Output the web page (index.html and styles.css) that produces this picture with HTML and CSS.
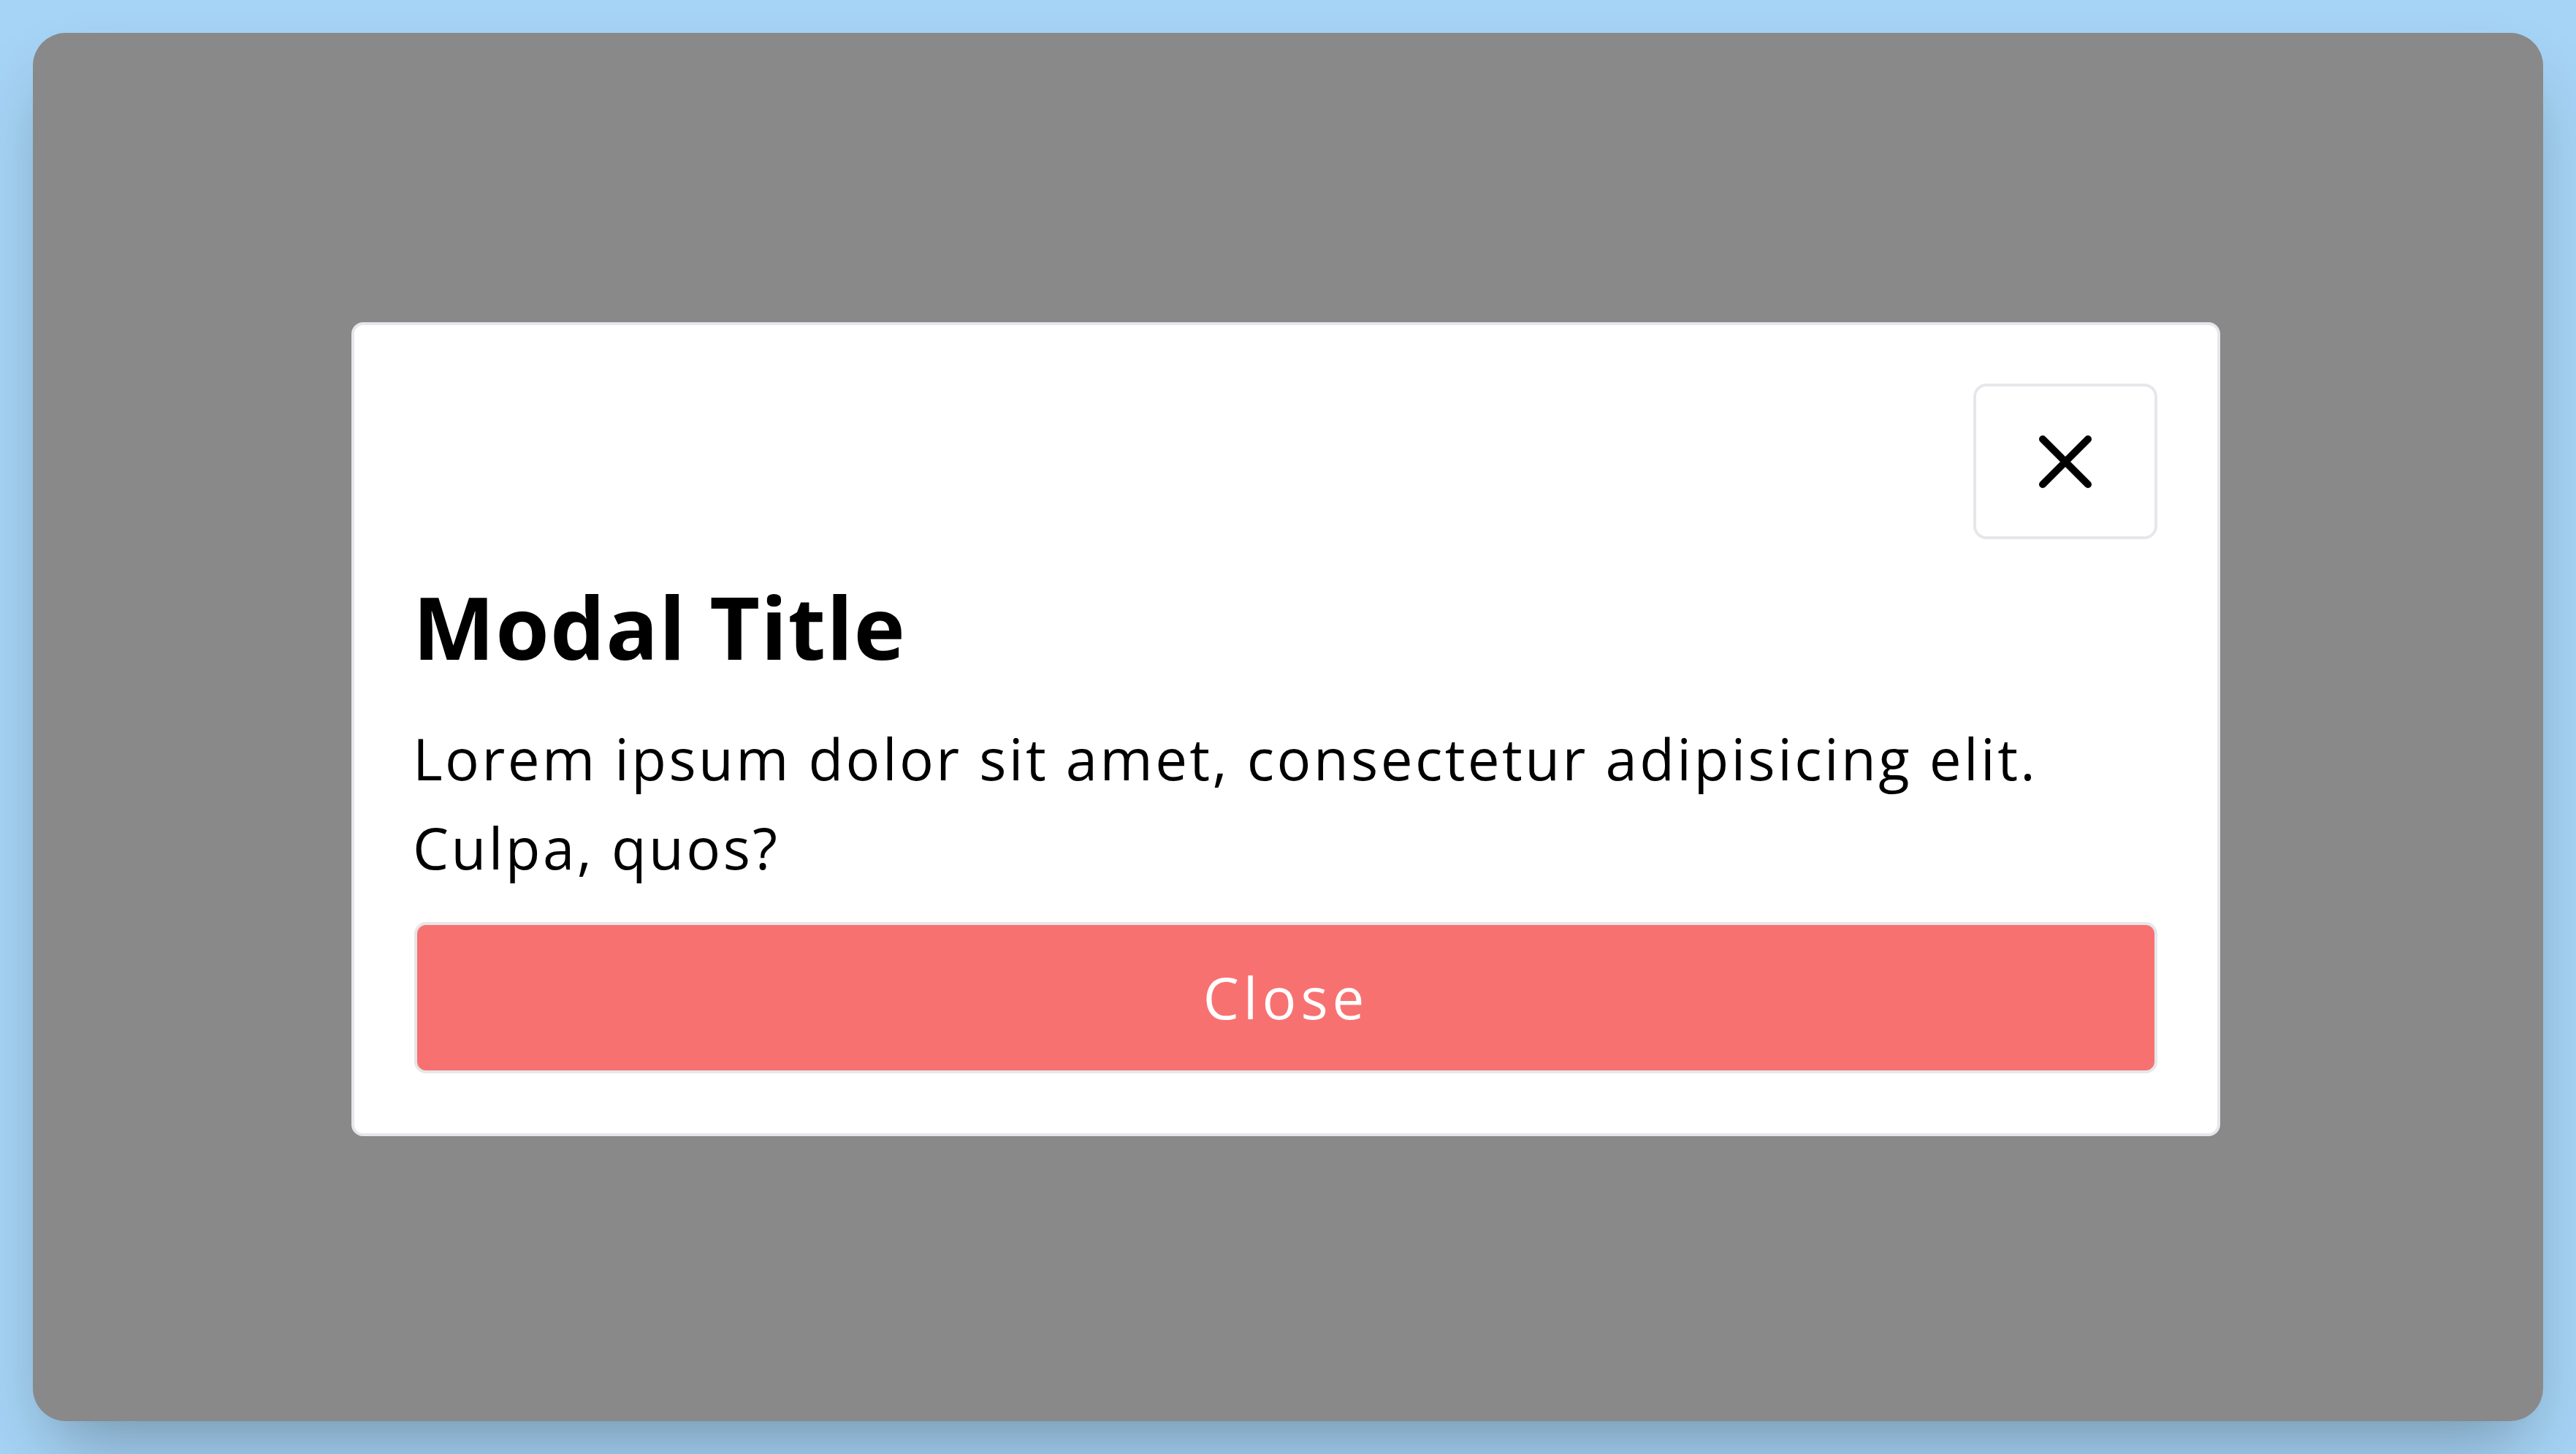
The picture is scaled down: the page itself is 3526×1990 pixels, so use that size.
FILE: index.html
```html
<!DOCTYPE html>
<html lang="en">
<head>
<meta charset="utf-8">
<title>Modal</title>
<link rel="stylesheet" href="styles.css">
</head>
<body>
<div class="page">
  <div class="frame">
    <div class="modal">
      <button class="icon-btn" type="button" aria-label="Close">
        <svg class="x-icon" width="72" height="72" viewBox="0 0 72 72">
          <path d="M5 5 L67 67 M67 5 L5 67" fill="none" stroke="#000" stroke-width="10" stroke-linecap="round"/>
        </svg>
      </button>
      <h2 class="title">Modal Title</h2>
      <p class="text">Lorem ipsum dolor sit amet, consectetur adipisicing elit. Culpa, quos?</p>
      <button class="close-btn" type="button">Close</button>
    </div>
  </div>
</div>
</body>
</html>
```
FILE: styles.css
```css
html, body {
  margin: 0;
  padding: 0;
}
body {
  background: #a6d4f6;
  font-family: "Open Sans", "Noto Sans", sans-serif;
  color: #000;
}
.page {
  padding: 45px;
  height: 1990px;
  box-sizing: border-box;
}
.frame {
  height: 1900px;
  background: #898989;
  border-radius: 45px;
  box-shadow: 0 50px 100px -25px rgba(0, 0, 0, 0.3);
  display: flex;
  align-items: center;
  justify-content: center;
  padding-top: 6px;
  padding-right: 6px;
  box-sizing: border-box;
}
.modal {
  width: 2558px;
  box-sizing: border-box;
  background: #fff;
  border: 4px solid #e5e7eb;
  border-radius: 16px;
  padding: 80px 82px 82px 82px;
  display: flex;
  flex-direction: column;
}
.icon-btn {
  align-self: flex-end;
  width: 252px;
  height: 213px;
  box-sizing: border-box;
  border: 4px solid #e5e7eb;
  border-radius: 18px;
  background: #fff;
  display: flex;
  align-items: center;
  justify-content: center;
  padding: 0;
  margin: 0;
}
.x-icon {
  display: block;
}
.title {
  margin: 48px 0 0 -2px;
  font-size: 119px;
  line-height: 143px;
  font-weight: 700;
  letter-spacing: 1px;
}
.text {
  margin: 48px 0 0 -2px;
  font-size: 78px;
  line-height: 122px;
  font-weight: 400;
  letter-spacing: 3.4px;
}
.close-btn {
  margin-top: 41px;
  height: 207px;
  box-sizing: border-box;
  border: 4px solid #e5e7eb;
  border-radius: 16px;
  background: #f87171;
  color: #fff;
  font-family: "Open Sans", "Noto Sans", sans-serif;
  font-size: 78px;
  line-height: 121px;
  letter-spacing: 6px;
  padding: 39px 0;
  width: 100%;
}
```
